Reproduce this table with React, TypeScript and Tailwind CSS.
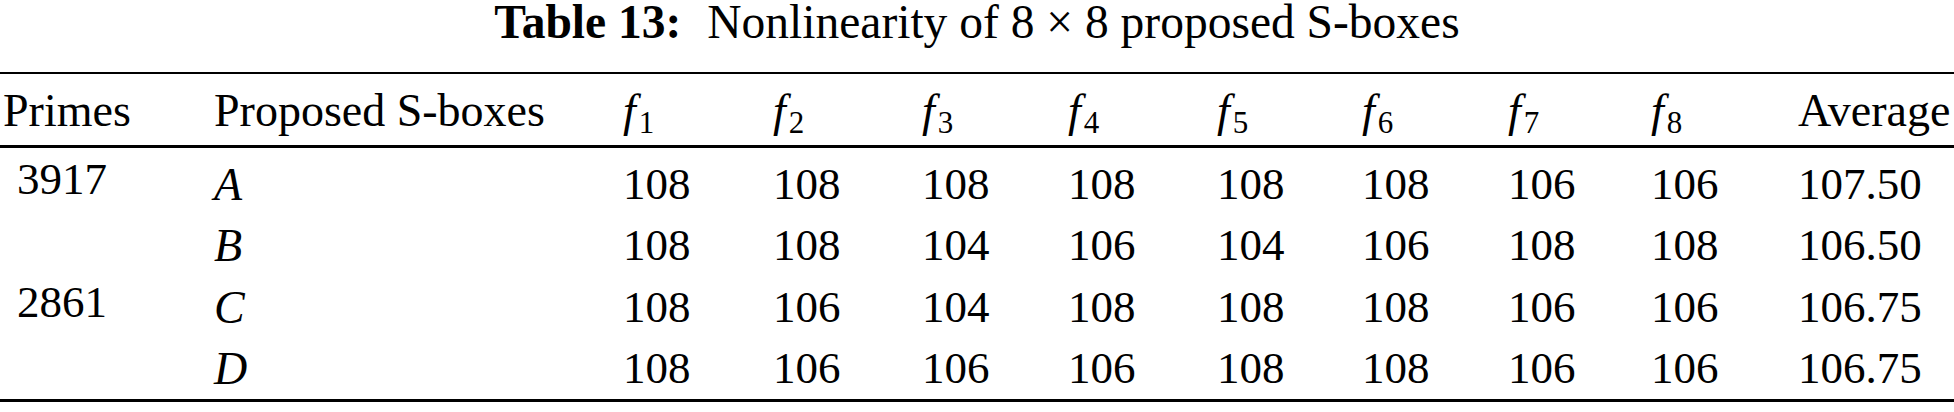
import React from "react";

const cols =
  "grid grid-cols-[211px_409px_150px_149px_146px_149px_145px_146px_143px_147px_1fr]";

function F({ n }: { n: number }) {
  return (
    <span className="whitespace-nowrap">
      <span className="italic">f</span>
      <span className="relative top-[7px] ml-[3px] text-[31px]">{n}</span>
    </span>
  );
}

const rows: { prime: string; box: string; vals: string[]; avg: string }[] = [
  { prime: "3917", box: "A", vals: ["108", "108", "108", "108", "108", "108", "106", "106"], avg: "107.50" },
  { prime: "", box: "B", vals: ["108", "108", "104", "106", "104", "106", "108", "108"], avg: "106.50" },
  { prime: "2861", box: "C", vals: ["108", "106", "104", "108", "108", "108", "106", "106"], avg: "106.75" },
  { prime: "", box: "D", vals: ["108", "106", "106", "106", "108", "108", "106", "106"], avg: "106.75" },
];

export default function App() {
  return (
    <div className="w-[1954px] h-[412px] bg-white text-black [font-family:'Liberation_Serif','Times_New_Roman',serif] text-[45px]">
      <div className="h-[44px] leading-[44px] text-center text-[47.5px] whitespace-nowrap">
        <span className="font-bold">Table 13:</span>
        <span className="inline-block w-[26px]" />
        <span>Nonlinearity of 8 × 8 proposed S-boxes</span>
      </div>
      <div className="mt-[28px] border-t-2 border-black" />
      <div className={`${cols} pl-[3px] h-[74px] leading-[74px] text-[46px] border-b-[3px] border-black`}>
        <div>Primes</div>
        <div>Proposed S-boxes</div>
        {[1, 2, 3, 4, 5, 6, 7, 8].map((n) => (
          <div key={n}>
            <F n={n} />
          </div>
        ))}
        <div className="whitespace-nowrap">Average</div>
      </div>
      <div className="pt-[6px] border-b-[3px] border-black">
        {rows.map((r, i) => (
          <div key={i} className={`${cols} pl-[3px] h-[61.3px] leading-[61.3px]`}>
            <div className="pl-[14px] leading-[51px]">{r.prime}</div>
            <div className="italic text-[46px]">{r.box}</div>
            {r.vals.map((v, j) => (
              <div key={j}>{v}</div>
            ))}
            <div>{r.avg}</div>
          </div>
        ))}
      </div>
    </div>
  );
}
